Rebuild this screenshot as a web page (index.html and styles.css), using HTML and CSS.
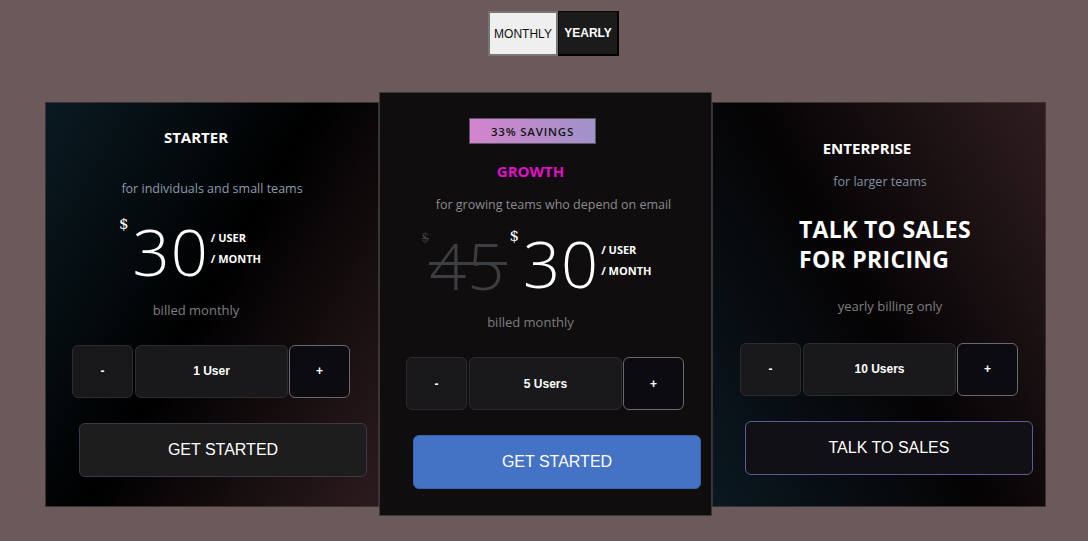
FILE: index.html
```html
<!DOCTYPE html>
<html>
<head>
<meta charset="utf-8">
<link rel="stylesheet" href="styles.css">
</head>
<body>
<div class="page">
  <div class="toggle">
    <button class="tg tg-month">MONTHLY</button>
    <button class="tg tg-year">YEARLY</button>
  </div>
  <div class="cards">
    <div class="card card-starter">
      <div class="title t-starter">STARTER</div>
      <div class="sub sub-starter">for individuals and small teams</div>
      <div class="price price-starter">
        <span class="cur">$</span>
        <span class="amt">30</span>
        <span class="per"><span>/ USER</span><span>/ MONTH</span></span>
      </div>
      <div class="billed billed-starter">billed monthly</div>
      <div class="stepper st-starter">
        <button class="sb minus">-</button>
        <div class="sv">1 User</div>
        <button class="sb plus">+</button>
      </div>
      <button class="cta cta-dark cta-starter">GET STARTED</button>
    </div>
    <div class="card card-growth">
      <div class="badge">33% SAVINGS</div>
      <div class="title t-growth">GROWTH</div>
      <div class="sub sub-growth">for growing teams who depend on email</div>
      <div class="price price-growth">
        <span class="old"><span class="cur old-cur">$</span><span class="amt old-amt">45</span></span>
        <span class="cur">$</span>
        <span class="amt">30</span>
        <span class="per"><span>/ USER</span><span>/ MONTH</span></span>
      </div>
      <div class="billed billed-growth">billed monthly</div>
      <div class="stepper st-growth">
        <button class="sb minus">-</button>
        <div class="sv">5 Users</div>
        <button class="sb plus">+</button>
      </div>
      <button class="cta cta-blue cta-growth">GET STARTED</button>
    </div>
    <div class="card card-ent">
      <div class="title t-ent">ENTERPRISE</div>
      <div class="sub sub-ent">for larger teams</div>
      <div class="talk">TALK TO SALES<br>FOR PRICING</div>
      <div class="billed billed-ent">yearly billing only</div>
      <div class="stepper st-ent">
        <button class="sb minus">-</button>
        <div class="sv">10 Users</div>
        <button class="sb plus">+</button>
      </div>
      <button class="cta cta-outline cta-ent">TALK TO SALES</button>
    </div>
  </div>
</div>
</body>
</html>
```
FILE: styles.css
```css
* { box-sizing: border-box; }
html, body { margin: 0; padding: 0; }
body {
  background: #6b5a59;
  width: 1088px;
  height: 541px;
  overflow: hidden;
  font-family: "Open Sans", "DejaVu Sans", sans-serif;
}
.page { display: flex; flex-direction: column; align-items: center; }
.toggle { display: flex; margin-top: 11px; margin-left: 19px; }
.tg {
  font-family: "Liberation Sans", Arial, sans-serif;
  font-size: 12px;
  height: 45px;
  padding: 0;
  margin: 0;
}
.tg-month { width: 70px; background: #efefef; color: #111; border: 2px solid #767676; }
.tg-year { width: 61px; background: #1b1b1b; color: #fff; font-weight: bold; border: 1px solid #0a0a0a; border-right: 2px solid #000; border-bottom: 2px solid #000; }

.cards { display: flex; align-items: center; margin-top: 36px; margin-left: 3px; }
.card { display: flex; flex-direction: column; align-items: center; flex: none; }
.card-starter {
  width: 334px; height: 405px;
  background: linear-gradient(120deg, #0a1a22 0%, #000 48%, #2c1b1e 100%);
  border: 1px solid #3a3232;
  padding-top: 24px;
}
.card-growth {
  width: 333px; height: 424px;
  background: #0f0d0e;
  border: 1px solid #3c3838;
  padding-top: 25px;
}
.card-ent {
  width: 334px; height: 405px;
  background: linear-gradient(240deg, #2f1d20 0%, #050304 52%, #0a1820 100%);
  border: 1px solid #3a3232;
  padding-top: 34px;
}

.badge {
  width: 127px;
  height: 26px;
  margin-right: 26px;
  background: linear-gradient(90deg, #d384cd, #a093c9);
  border: 1px solid #5a5560;
  color: #141414;
  font-size: 11.5px;
  font-weight: 600;
  letter-spacing: 0.8px;
  display: flex; align-items: center; justify-content: center;
}

.title {
  font-weight: bold;
  font-size: 15px;
  color: #fff;
  line-height: 22px;
  margin-right: 32px;
}
.t-starter { margin-top: -1px; }
.t-growth { color: #e010c8; margin-top: 16px; margin-right: 30px; }
.t-ent { margin-right: 24px; }

.sub { font-size: 12.5px; line-height: 18px; color: #8e9aad; }
.sub-starter { margin-top: 32px; }
.sub-growth { margin-top: 14px; color: #8b8b8b; margin-left: 16px; }
.sub-ent { margin-top: 14px; color: #8390a3; margin-left: 2px; }

.price { display: flex; align-items: flex-start; color: #fff; height: 60px; }
.price-starter { margin-top: 23px; margin-right: 44px; }
.price-growth { margin-top: 19px; margin-right: 18px; }
.cur { font-size: 15px; line-height: 18px; margin-top: -6px; font-family: "DejaVu Serif", serif; }
.amt { font-size: 65px; line-height: 60px; font-weight: 300; margin-left: 4px; letter-spacing: 1px; }
.per { display: flex; flex-direction: column; font-size: 11px; font-weight: bold; line-height: 21px; margin-top: 6px; margin-left: 2px; }
.old { display: flex; align-items: flex-start; color: #3d3e42; position: relative; margin-right: 4px; }
.old-cur { text-decoration: line-through; font-size: 12px; margin-top: -4px; }
.old-amt { margin-left: 0; margin-top: 2px; }
.old::after {
  content: "";
  position: absolute;
  left: 7px; right: -2px; top: 29px;
  height: 3px;
  background: #3d3e42;
}

.billed { font-size: 13px; color: #7e7e7e; line-height: 18px; }
.billed-starter { margin-top: 20px; margin-right: 32px; }
.billed-growth { margin-top: 20px; margin-right: 30px; }
.billed-ent { margin-top: 23px; margin-left: 22px; }

.talk {
  font-size: 23px;
  font-weight: bold;
  color: #fff;
  line-height: 30px;
  align-self: flex-start;
  margin-left: 86px;
  margin-top: 23px;
  letter-spacing: 0.3px;
}

.stepper { display: flex; width: 278px; align-self: flex-start; margin-left: 26px; margin-top: 26px; }
.st-ent { margin-top: 28px; margin-left: 27px; }
.sb, .sv {
  height: 53px;
  border-radius: 6px;
  font-family: "Liberation Sans", Arial, sans-serif;
  font-size: 12px;
  font-weight: bold;
  color: #fff;
  display: flex; align-items: center; justify-content: center;
  padding: 0;
  flex: none;
}
.minus { width: 61px; background: #18181a; border: 1px solid #2c2c2e; }
.sv { width: 153px; margin: 0 1px 0 2px; background: #19191b; border: 1px solid #2c2c2e; }
.plus { width: 61px; background: #0b0b11; border: 1px solid #6a6a6a; }

.cta {
  font-family: "Liberation Sans", Arial, sans-serif;
  font-size: 16px;
  color: #fff;
  height: 54px;
  width: 288px;
  border-radius: 6px;
  align-self: flex-start;
  margin-left: 33px;
  margin-top: 25px;
  padding: 0;
}
.cta-dark { background: #1d1d1e; border: 1px solid #3b3848; }
.cta-blue { background: #4472c4; border: 1px solid #3a62a8; }
.cta-outline { background: #111014; border: 1px solid #5c5a98; margin-left: 32px; }
```
